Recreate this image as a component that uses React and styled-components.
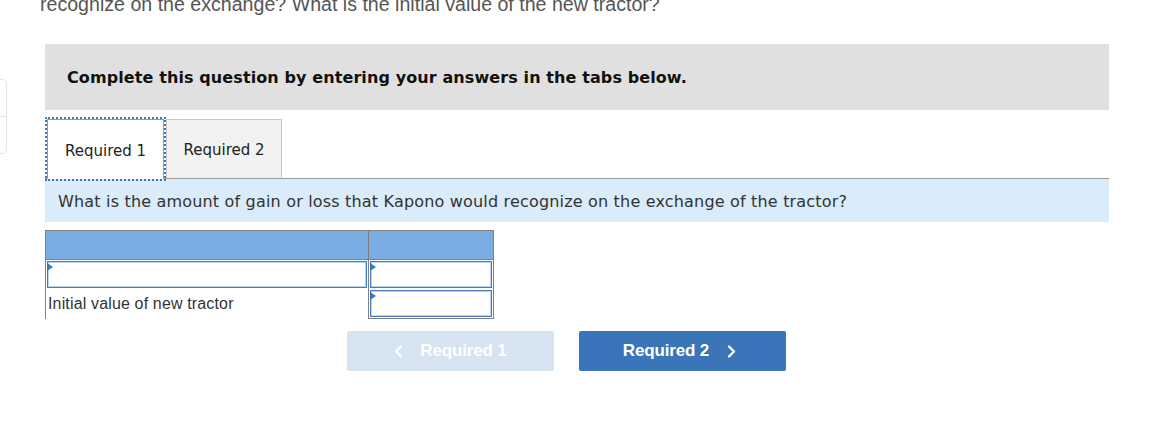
import styled, { createGlobalStyle } from "styled-components";

const GlobalStyle = createGlobalStyle`
  body {
    margin: 0;
    background: #fff;
    font-family: "DejaVu Sans", Verdana, sans-serif;
    overflow: hidden;
  }
`;

const Page = styled.div`
  position: relative;
  width: 1162px;
  height: 428px;
  overflow: hidden;
`;

// petit widget collé au bord gauche de la fenêtre
const SideWidget = styled.div`
  position: absolute;
  left: -30px;
  top: 79px;
  width: 35px;
  border: 1px solid #e3e3e3;
  border-radius: 5px;
  background: #fff;
`;

const SideCell = styled.div`
  height: 36px;
  & + & {
    border-top: 1px solid #e3e3e3;
  }
`;

const Intro = styled.p`
  margin: -6px 0 0 40px;
  font-family: "Liberation Sans", Arial, sans-serif;
  font-size: 19.6px;
  line-height: 20px;
  color: #555;
`;

const Wrapper = styled.div`
  margin: 30px 0 0 45px;
  width: 1064px;
`;

const Banner = styled.div`
  height: 66px;
  background: #e0e0e0;
  display: flex;
  align-items: center;
  padding-left: 22px;
  font-weight: bold;
  font-size: 16px;
  letter-spacing: 0.1px;
  color: #111;
`;

const TabStrip = styled.div`
  margin-top: 9px;
  padding-left: 2px;
  display: flex;
  align-items: flex-end;
  gap: 2px;
  border-bottom: 1px solid #9a9a9a;
  height: 59px;
`;

const Tab = styled.div`
  height: ${(p) => (p.$active ? "60px" : "59px")};
  margin-bottom: ${(p) => (p.$active ? "-1px" : "0")};
  box-sizing: border-box;
  display: flex;
  align-items: center;
  justify-content: center;
  padding-top: 2px;
  font-size: 15px;
  color: #222;
  background: ${(p) => (p.$active ? "#fff" : "#f2f2f2")};
  border: 1px solid ${(p) => (p.$active ? "#9a9a9a" : "#c8c8c8")};
  border-bottom: none;
  width: ${(p) => p.$w}px;
  outline: ${(p) => (p.$active ? "2px dotted #3c78c0" : "none")};
  outline-offset: 0;
  position: relative;
  z-index: ${(p) => (p.$active ? 1 : 0)};
`;

const Question = styled.div`
  height: 43px;
  background: #daebf9;
  display: flex;
  align-items: center;
  padding: 1px 0 0 13px;
  box-sizing: border-box;
  font-size: 16px;
  letter-spacing: 0.18px;
  color: #333;
`;

const Table = styled.div`
  margin-top: 8px;
  width: 449px;
  font-family: "Liberation Sans", Arial, sans-serif;
`;

const Row = styled.div`
  display: grid;
  grid-template-columns: 323px 126px;
  box-sizing: border-box;
  height: ${(p) => p.$h}px;
  background: ${(p) => (p.$head ? "#7aade4" : "transparent")};
  border-top: ${(p) => (p.$head ? "1px solid #7f7f7f" : "none")};
  border-bottom: ${(p) => (p.$head ? "1px solid #7f7f7f" : "none")};
`;

const Cell = styled.div`
  box-sizing: border-box;
  border-left: 1px solid #7f7f7f;
  border-right: ${(p) => (p.$right ? "1px solid #7f7f7f" : "none")};
  border-bottom: ${(p) => (p.$bottom ? "1px solid #7f7f7f" : "none")};
  padding: ${(p) => (p.$pad ? "1px" : "0")};
  display: flex;
  align-items: center;
`;

const Label = styled.span`
  font-size: 16px;
  letter-spacing: 0.15px;
  color: #333;
  padding-left: 2px;
`;

const Input = styled.div`
  position: relative;
  box-sizing: border-box;
  width: 100%;
  height: 100%;
  background: #fff;
  border: 1px solid #3f7cc2;
  box-shadow: inset 0 0 0 1px #bcd5f1;

  &::before {
    content: "";
    position: absolute;
    left: -1px;
    top: 1px;
    border-left: 6px solid #3a75c0;
    border-top: 4px solid transparent;
    border-bottom: 4px solid transparent;
  }
`;

const Nav = styled.div`
  margin: 12px 0 0 302px;
  display: flex;
  gap: 25px;
`;

const NavButton = styled.div`
  width: 207px;
  height: 40px;
  border-radius: 2px;
  background: ${(p) => (p.$disabled ? "#d6e3f1" : "#3a75ba")};
  color: #fff;
  display: flex;
  align-items: center;
  justify-content: center;
  gap: ${(p) => (p.$disabled ? "17px" : "18px")};
  padding-right: ${(p) => (p.$disabled ? "0" : "6px")};
  box-sizing: border-box;
  font-family: "Liberation Sans", Arial, sans-serif;
  font-weight: bold;
  font-size: 17px;
  letter-spacing: -0.15px;
`;

const Chevron = ({ dir }) => (
  <svg width="9" height="13" viewBox="0 0 9 13">
    <polyline
      points={dir === "left" ? "7,1.5 2,6.5 7,11.5" : "2,1.5 7,6.5 2,11.5"}
      fill="none"
      stroke="#fff"
      strokeWidth="2.2"
      strokeLinecap="round"
      strokeLinejoin="round"
    />
  </svg>
);

const App = () => {
  return (
    <Page>
      <GlobalStyle />
      <SideWidget>
        <SideCell />
        <SideCell />
      </SideWidget>
      <Intro>recognize on the exchange? What is the initial value of the new tractor?</Intro>
      <Wrapper>
        <Banner>Complete this question by entering your answers in the tabs below.</Banner>
        <TabStrip>
          <Tab $active $w={117}>Required 1</Tab>
          <Tab $w={116}>Required 2</Tab>
        </TabStrip>
        <Question>
          What is the amount of gain or loss that Kapono would recognize on the exchange of the tractor?
        </Question>
        <Table>
          <Row $head $h={30}>
            <Cell />
            <Cell $right />
          </Row>
          <Row $h={29}>
            <Cell $pad>
              <Input />
            </Cell>
            <Cell $pad $right>
              <Input />
            </Cell>
          </Row>
          <Row $h={30}>
            <Cell>
              <Label>Initial value of new tractor</Label>
            </Cell>
            <Cell $pad $right $bottom>
              <Input />
            </Cell>
          </Row>
        </Table>
        <Nav>
          <NavButton $disabled>
            <Chevron dir="left" />
            Required 1
          </NavButton>
          <NavButton>
            Required 2
            <Chevron dir="right" />
          </NavButton>
        </Nav>
      </Wrapper>
    </Page>
  );
};

export default App;
